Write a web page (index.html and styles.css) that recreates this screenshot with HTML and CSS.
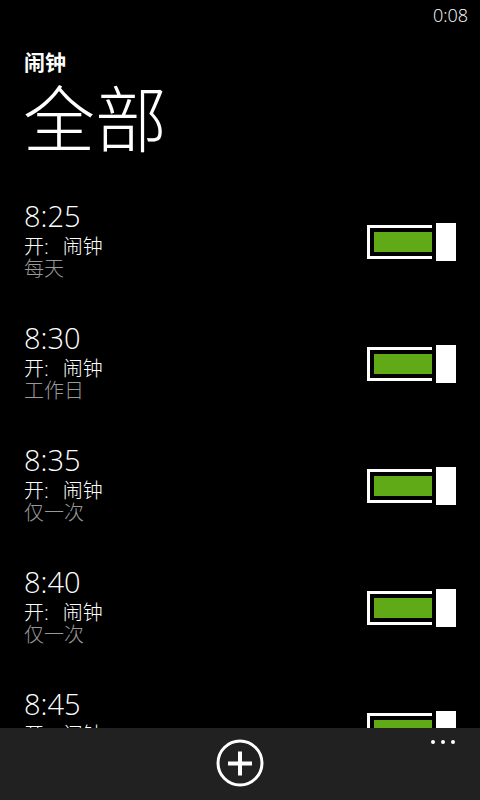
FILE: index.html
```html
<!DOCTYPE html>
<html lang="zh-CN">
<head>
    <meta charset="UTF-8">
    <meta name="viewport" content="width=device-width, initial-scale=1.0">
    <title>闹钟</title>
    <link rel="stylesheet" href="styles.css">
</head>
<body>
    <div class="statusbar">0:08</div>

    <div class="header">
        <div class="app-title">闹钟</div>
        <h1 class="page-title">全部</h1>
    </div>

    <div class="alarms">
        <div class="alarm">
            <div class="alarm-info">
                <div class="alarm-time">8:25</div>
                <div class="alarm-name">开:<span>闹钟</span></div>
                <div class="alarm-repeat">每天</div>
            </div>
            <div class="toggle"><div class="track"><div class="fill"></div></div><div class="thumb"></div></div>
        </div>
        <div class="alarm">
            <div class="alarm-info">
                <div class="alarm-time">8:30</div>
                <div class="alarm-name">开:<span>闹钟</span></div>
                <div class="alarm-repeat">工作日</div>
            </div>
            <div class="toggle"><div class="track"><div class="fill"></div></div><div class="thumb"></div></div>
        </div>
        <div class="alarm">
            <div class="alarm-info">
                <div class="alarm-time">8:35</div>
                <div class="alarm-name">开:<span>闹钟</span></div>
                <div class="alarm-repeat">仅一次</div>
            </div>
            <div class="toggle"><div class="track"><div class="fill"></div></div><div class="thumb"></div></div>
        </div>
        <div class="alarm">
            <div class="alarm-info">
                <div class="alarm-time">8:40</div>
                <div class="alarm-name">开:<span>闹钟</span></div>
                <div class="alarm-repeat">仅一次</div>
            </div>
            <div class="toggle"><div class="track"><div class="fill"></div></div><div class="thumb"></div></div>
        </div>
        <div class="alarm">
            <div class="alarm-info">
                <div class="alarm-time">8:45</div>
                <div class="alarm-name">开:<span>闹钟</span></div>
                <div class="alarm-repeat">仅一次</div>
            </div>
            <div class="toggle"><div class="track"><div class="fill"></div></div><div class="thumb"></div></div>
        </div>
    </div>

    <!-- 底部应用栏 -->
    <div class="appbar">
        <div class="add-button">
            <svg width="50" height="50" viewBox="0 0 50 50">
                <circle cx="25" cy="25" r="22" fill="none" stroke="#fff" stroke-width="3"/>
                <path d="M13 25.5 H37 M25 13.5 V37.5" stroke="#fff" stroke-width="4"/>
            </svg>
        </div>
        <div class="more">
            <span></span><span></span><span></span>
        </div>
    </div>
</body>
</html>
```

FILE: styles.css
```css
* {
    margin: 0;
    padding: 0;
    box-sizing: border-box;
}
body {
    background-color: #000;
    color: #fff;
    font-family: "Open Sans", "Noto Sans CJK SC", sans-serif;
    height: 800px;
    overflow: hidden;
}
.statusbar {
    height: 32px;
    padding: 3px 12px 0 0;
    text-align: right;
    font-size: 18px;
    font-weight: 300;
    line-height: 24px;
}
.header {
    padding-left: 24px;
}
.app-title {
    margin-top: 16px;
    font-size: 21px;
    font-weight: bold;
    line-height: 28px;
}
.page-title {
    font-size: 72px;
    font-weight: 300;
    line-height: 84px;
    margin-left: -1px;
}
.alarms {
    margin-top: 22px;
    padding: 0 24px;
}
.alarm {
    display: flex;
    justify-content: space-between;
    align-items: flex-start;
    height: 122px;
}
.alarm-info {
    padding-top: 14px;
}
.alarm-time {
    font-size: 29px;
    font-weight: 300;
    line-height: 40px;
}
.alarm-name {
    font-size: 20px;
    font-weight: 300;
    line-height: 22px;
}
.alarm-name span {
    margin-left: 14px;
}
.alarm-repeat {
    font-size: 20px;
    font-weight: 300;
    line-height: 22px;
    color: #999;
}
.toggle {
    display: flex;
    align-items: center;
    gap: 4px;
    margin-top: 41px;
}
.track {
    width: 65px;
    height: 34px;
    border: 3px solid #fff;
    border-right: none;
    padding: 4px 0 4px 4px;
}
.fill {
    height: 100%;
    background-color: #60A917;
}
.thumb {
    width: 20px;
    height: 38px;
    background-color: #fff;
}
/* 应用栏 */
.appbar {
    position: fixed;
    left: 0;
    bottom: 0;
    width: 100%;
    height: 72px;
    background-color: #212121;
    display: flex;
    justify-content: center;
    padding-top: 10px;
}
.add-button {
    width: 50px;
    height: 50px;
}
.more {
    position: absolute;
    top: 12px;
    right: 25px;
    display: flex;
    gap: 6px;
}
.more span {
    width: 4px;
    height: 4px;
    border-radius: 50%;
    background-color: #fff;
}
```
